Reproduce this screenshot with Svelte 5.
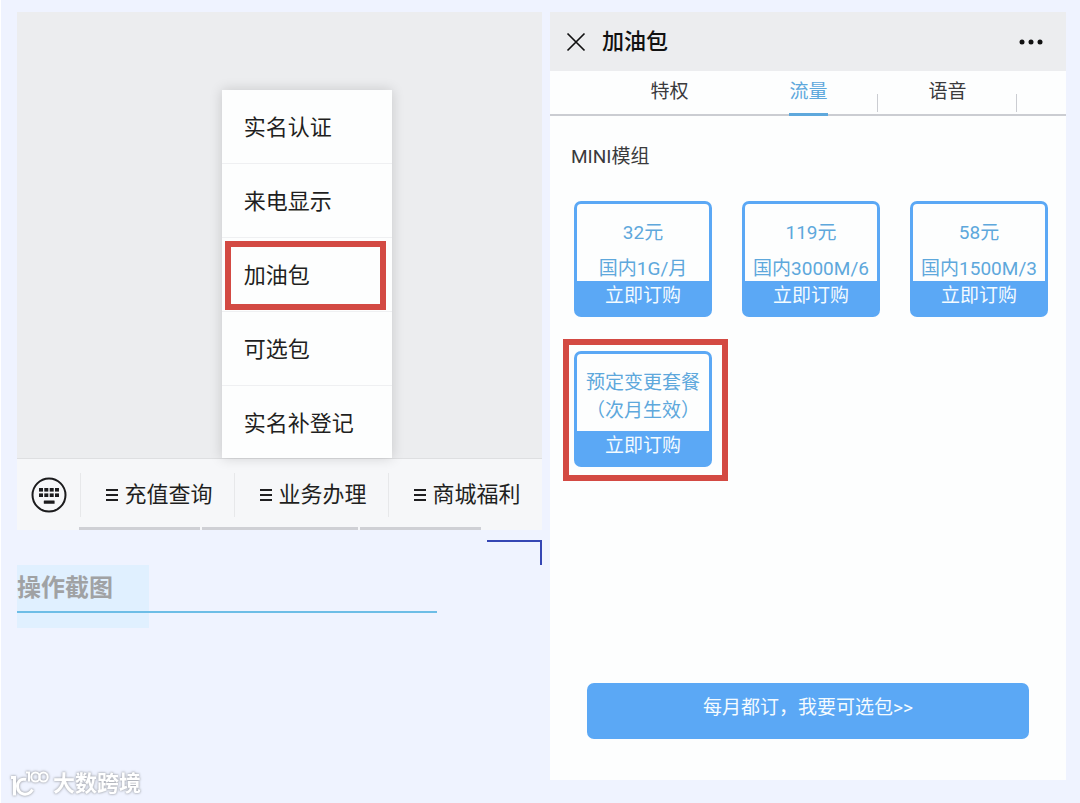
<script>
  const menuItems = ['实名认证', '来电显示', '加油包', '可选包', '实名补登记'];
  const barItems = ['充值查询', '业务办理', '商城福利'];
  const tabs = ['特权', '流量', '语音'];
  const packs = [
    { lines: ['32元', '国内1G/月'], spaced: true },
    { lines: ['119元', '国内3000M/6'], spaced: true },
    { lines: ['58元', '国内1500M/3'], spaced: true },
    { lines: ['预定变更套餐', '（次月生效）'], marked: true }
  ];

  let activeMenu = $state('加油包');
  let activeTab = $state('流量');
</script>

<main class="page">
  <div class="column">
    <section class="chat">
      <div class="chat-body">
        <div class="menu">
          {#each menuItems as item}
            <button class="menu-item" class:marked={item === activeMenu} onclick={() => (activeMenu = item)}>
              {item}
            </button>
          {/each}
        </div>
      </div>
      <nav class="chat-bar">
        <button class="keyboard" aria-label="键盘">
          <svg width="36" height="36" viewBox="0 0 36 36">
            <circle cx="18" cy="18" r="16.5" fill="none" stroke="#1b1b1d" stroke-width="2" />
            <g fill="#1b1b1d">
              {#each [8, 13.3, 18.7, 24] as x}
                <rect {x} y="11" width="4" height="3.6" />
                <rect {x} y="16.4" width="4" height="3.6" />
              {/each}
              <rect x="12.8" y="23.4" width="10.8" height="3.4" rx="0.5" />
            </g>
          </svg>
        </button>
        {#each barItems as item}
          <button class="bar-item">
            <svg width="12" height="12" viewBox="0 0 12 12">
              <path d="M0 1h12M0 6h12M0 11h12" stroke="#1f1f21" stroke-width="1.8" />
            </svg>
            {item}
          </button>
        {/each}
      </nav>
      <div class="strip"><i></i><i></i><i></i></div>
    </section>

    <div class="corner"></div>

    <section class="caption">
      <h2>操作截图</h2>
    </section>
  </div>

  <section class="shop">
    <header class="shop-header">
      <button class="icon-button" aria-label="关闭">
        <svg width="20" height="20" viewBox="0 0 20 20">
          <path d="M1.5 1.5l17 17M18.5 1.5l-17 17" stroke="#111" stroke-width="1.7" />
        </svg>
      </button>
      <h1>加油包</h1>
      <button class="icon-button" aria-label="更多">
        <svg width="26" height="6" viewBox="0 0 26 6" fill="#111">
          <circle cx="4" cy="3" r="2.5" />
          <circle cx="13" cy="3" r="2.5" />
          <circle cx="22" cy="3" r="2.5" />
        </svg>
      </button>
    </header>

    <nav class="tabs">
      {#each tabs as tab}
        <button class="tab" class:active={tab === activeTab} onclick={() => (activeTab = tab)}>
          <span>{tab}</span>
        </button>
      {/each}
    </nav>

    <h3>MINI模组</h3>

    <div class="packs">
      {#each packs as pack}
        <article class="pack" class:marked={pack.marked}>
          <div class="pack-body" class:spaced={pack.spaced}>
            {#each pack.lines as line}
              <p>{line}</p>
            {/each}
          </div>
          <button class="order">立即订购</button>
        </article>
      {/each}
    </div>

    <button class="optional">每月都订，我要可选包&gt;&gt;</button>
  </section>

  <div class="watermark">
    <svg width="42" height="32" viewBox="0 0 42 32" fill="none" stroke="#fff">
      <path d="M2 9.500h3.500v18" stroke-width="3" />
      <path d="M17 11.500c-6-1.500-8.500 3-8.500 6.500 0 9 10.500 11 15 3.500" stroke-width="3" />
      <path d="M17 4.500h3v9" stroke-width="2" />
      <ellipse cx="26.500" cy="9" rx="4.200" ry="4.600" stroke-width="2" />
      <ellipse cx="34.500" cy="9" rx="4.200" ry="4.600" stroke-width="2" />
    </svg>
    <span>大数跨境</span>
  </div>
</main>

<style>
  :global(body) {
    margin: 0;
    background: #eff3ff;
  }

  .page {
    position: relative;
    box-sizing: border-box;
    min-height: 100vh;
    display: grid;
    grid-template-columns: 525fr 516fr;
    gap: 8px;
    padding: 12px 14px 23px 16px;
    border-left: 1px solid #fff;
    font-family: Roboto, "Noto Sans CJK SC", sans-serif;
    color: #1f1f21;
  }

  button {
    border: 0;
    padding: 0;
    background: none;
    color: inherit;
    font: inherit;
    cursor: pointer;
  }

  h1,
  h2,
  h3,
  p {
    margin: 0;
  }

  svg {
    display: block;
    flex: none;
  }

  .chat {
    background: #f6f7f9;
  }

  .chat-body {
    padding: 78px 0 0 39%;
    background: #ecedef;
  }

  .menu {
    position: relative;
    display: flex;
    flex-direction: column;
    width: 170px;
    background: #fdfefe;
    box-shadow: 0 0 12px rgba(0, 0, 0, 0.16);
  }

  .menu-item {
    position: relative;
    height: 74px;
    padding: 3px 0 0 22px;
    border-bottom: 1px solid #eff0f2;
    text-align: left;
    font-size: 22px;
    line-height: 32px;
  }

  .menu-item:last-child {
    height: 72px;
    border-bottom: 0;
  }

  .menu-item.marked::after {
    content: '';
    position: absolute;
    inset: 3px 6px 1px 3px;
    border: 6px solid #d34a43;
  }

  .chat-bar {
    display: grid;
    grid-template-columns: 63px repeat(3, 1fr);
    align-items: center;
    height: 69px;
    border-top: 1px solid #dedfe1;
    box-sizing: border-box;
  }

  .keyboard {
    padding: 3px 0 0 14px;
  }

  .bar-item {
    display: flex;
    align-items: center;
    justify-content: center;
    gap: 6px;
    height: 44px;
    margin-top: 4px;
    padding-left: 4px;
    border-left: 1px solid #e7e8ea;
    font-size: 22px;
    line-height: 32px;
    white-space: nowrap;
  }

  .strip {
    display: grid;
    grid-template-columns: 121fr 155fr 121fr;
    gap: 2px;
    padding: 0 61px 0 62px;
  }

  .strip i {
    height: 3px;
    background: #cfd0d5;
  }

  .corner {
    box-sizing: border-box;
    width: 55px;
    height: 25px;
    margin: 10px 0 0 auto;
    border: solid #3546b4;
    border-width: 2px 2px 0 0;
  }

  .caption {
    width: 80%;
    padding-bottom: 15px;
    background: linear-gradient(#e0f0ff, #e0f0ff) no-repeat 0 0 / 132px 100%;
  }

  h2 {
    border-bottom: 2px solid #6dbde6;
    color: #a0a2a4;
    font-size: 24px;
    font-weight: 700;
    line-height: 46px;
  }

  .shop {
    display: flex;
    flex-direction: column;
    background: #fdfefe;
  }

  .shop-header {
    display: flex;
    align-items: center;
    gap: 16px;
    height: 59px;
    padding: 0 22px 0 16px;
    background: #ecedef;
    color: #111;
  }

  h1 {
    flex: 1;
    font-size: 22px;
    font-weight: 500;
    line-height: 32px;
  }

  .tabs {
    display: grid;
    grid-template-columns: repeat(3, 1fr);
    height: 43px;
    padding: 0 49px 0 50px;
    border-bottom: 2px solid #cbcdd2;
  }

  .tab {
    position: relative;
    color: #3a3a3c;
    font-size: 19px;
    line-height: 38px;
  }

  .tab span {
    display: inline-block;
    height: 42px;
    border-bottom: 3px solid transparent;
    line-height: 42px;
  }

  .tab.active {
    color: #5ea8dc;
  }

  .tab.active span {
    border-color: #5ea8dc;
  }

  .tab:not(:first-child)::after {
    content: '';
    position: absolute;
    right: 0;
    bottom: 4px;
    width: 1px;
    height: 18px;
    background: #cbcdd2;
  }

  h3 {
    padding: 27px 21px 0;
    color: #3a3a3c;
    font-size: 19px;
    font-weight: 400;
    line-height: 28px;
  }

  .packs {
    display: grid;
    grid-template-columns: repeat(3, 1fr);
    gap: 34px 30px;
    padding: 30px 18px 40px 24px;
  }

  .pack {
    position: relative;
    display: flex;
    flex-direction: column;
    min-width: 0;
    border-radius: 7px;
    background: #5ba8f5;
    text-align: center;
    font-size: 19px;
    line-height: 28px;
  }

  .pack-body {
    height: 62px;
    margin: 3px 3px 0;
    padding-top: 15px;
    border-radius: 4px 4px 0 0;
    background: #fdfefe;
    color: #5ea8dc;
    white-space: nowrap;
  }

  .pack-body.spaced {
    display: grid;
    align-content: start;
    gap: 8px;
  }

  .spaced p:last-child {
    height: 26px;
  }

  .order {
    height: 36px;
    padding-bottom: 6px;
    color: #f4fbff;
  }

  .pack.marked::after {
    content: '';
    position: absolute;
    inset: -12px -16px -14px -11px;
    border: 6px solid #d34a43;
  }

  .optional {
    height: 56px;
    margin: auto 37px 41px;
    padding-bottom: 6px;
    border-radius: 7px;
    background: #5ba8f5;
    color: #f4fbff;
    font-size: 19px;
    line-height: 28px;
  }

  .watermark {
    position: absolute;
    left: 8px;
    bottom: 3px;
    display: flex;
    align-items: center;
    gap: 2px;
    color: #fff;
    font-size: 22px;
    font-weight: 700;
    line-height: 32px;
    filter: drop-shadow(0 0 1px #a5a8b0) drop-shadow(0 0 1px #c5c8d0);
  }
</style>
